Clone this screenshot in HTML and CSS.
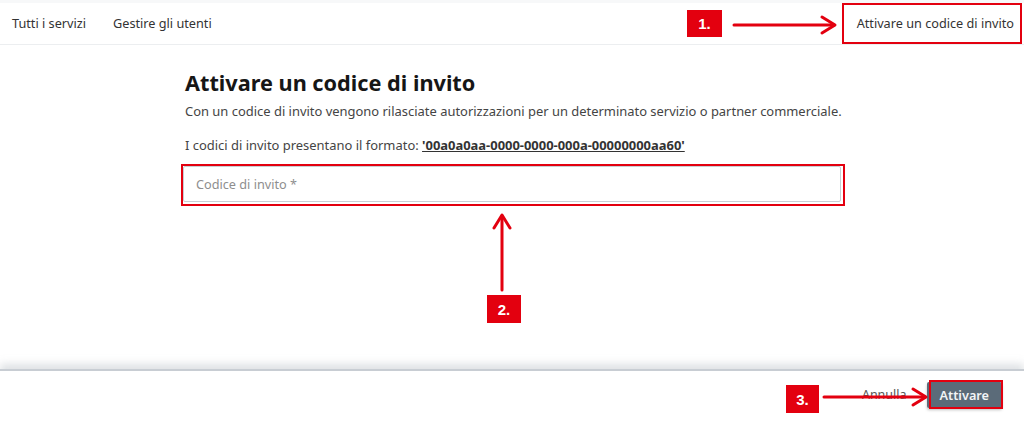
FILE: index.html
```html
<!DOCTYPE html>
<html lang="it">
<head>
<meta charset="utf-8">
<title>Attivare un codice di invito</title>
<link rel="stylesheet" href="styles.css">
</head>
<body>
<div class="page">
  <header class="nav">
    <div class="nav-left">
      <a class="nav-link">Tutti i servizi</a>
      <a class="nav-link">Gestire gli utenti</a>
    </div>
    <a class="nav-link nav-active">Attivare un codice di invito</a>
  </header>

  <main class="main">
    <div class="content">
      <h1 class="title">Attivare un codice di invito</h1>
      <p class="lead">Con un codice di invito vengono rilasciate autorizzazioni per un determinato servizio o partner commerciale.</p>
      <p class="format">I codici di invito presentano il formato: <strong class="code">'00a0a0aa-0000-0000-000a-00000000aa60'</strong></p>
      <div class="field">
        <input class="input" type="text" placeholder="Codice di invito *">
      </div>
    </div>
  </main>

  <footer class="footer">
    <span class="cancel">Annulla</span>
    <button class="btn">Attivare</button>
  </footer>

  <!-- annotation overlay -->
  <div class="mark mark-nav"></div>
  <div class="mark mark-input"></div>
  <div class="mark mark-btn"></div>
  <div class="tag tag-1">1.</div>
  <div class="tag tag-2">2.</div>
  <div class="tag tag-3">3.</div>
  <svg class="arrows" width="1024" height="422" viewBox="0 0 1024 422">
    <g fill="none" stroke="#e3000f" stroke-width="3" stroke-linecap="round" stroke-linejoin="round">
      <line x1="734" y1="25" x2="834" y2="25"/>
      <polyline points="822,17 835,25 822,33"/>
      <line x1="502" y1="290" x2="502" y2="216"/>
      <polyline points="494,228 502,215 510,228"/>
      <line x1="824" y1="397" x2="925" y2="397"/>
      <polyline points="913,389 926,397 913,405"/>
    </g>
  </svg>
</div>
</body>
</html>
```

FILE: styles.css
```css
* { box-sizing: border-box; }
html, body { margin: 0; padding: 0; }
body {
  font-family: "Noto Sans", "Open Sans", sans-serif;
  background: #ffffff;
  color: #333;
}
.page {
  position: relative;
  width: 1024px;
  height: 422px;
  display: flex;
  flex-direction: column;
  overflow: hidden;
}
.nav {
  height: 45px;
  border-top: 3px solid #f7f8f9;
  border-bottom: 1px solid #eceef0;
  display: flex;
  align-items: center;
  justify-content: space-between;
  padding: 0 10px 2px 12px;
}
.nav-left { display: flex; gap: 27px; }
.nav-link {
  font-size: 12.7px;
  color: #333;
}
.main {
  flex: 1;
  display: flex;
  justify-content: center;
}
.content {
  width: 662px;
  padding-top: 24px;
}
.title {
  margin: 0 0 0 4px;
  font-size: 21.7px;
  font-weight: 700;
  color: #161616;
  line-height: 28px;
}
.lead {
  margin: 5px 0 0 4px;
  font-size: 12.95px;
  color: #444;
  line-height: 19px;
}
.format {
  margin: 15px 0 0 4px;
  font-size: 12.95px;
  color: #444;
  line-height: 19px;
}
.code {
  color: #333;
  text-decoration: underline;
}
.field {
  margin-top: 11px;
  padding: 0 2px;
}
.input {
  display: block;
  width: 100%;
  height: 36px;
  border: 1px solid #c9cfd4;
  border-radius: 2px;
  padding: 0 12px;
  font-family: inherit;
  font-size: 12.7px;
  color: #333;
  background: #fff;
  outline: none;
}
.input::placeholder { color: #8e8e8e; }
.footer {
  height: 53px;
  border-top: 2px solid #c8cdd3;
  box-shadow: 0 -5px 8px rgba(160, 168, 178, 0.35);
  display: flex;
  align-items: center;
  justify-content: flex-end;
  gap: 20px;
  padding: 0 22px 4px 0;
}
.cancel {
  font-size: 12.5px;
  color: #555;
}
.btn {
  height: 26px;
  padding: 0 13px;
  border: none;
  border-radius: 2px;
  background: #5b6b79;
  color: #f2f4f6;
  font-family: inherit;
  font-size: 12.7px;
  font-weight: 600;
  box-shadow: 0 2px 3px rgba(0, 0, 0, 0.25);
}

/* annotations */
.mark {
  position: absolute;
  border: 2px solid #e3000f;
}
.mark-nav { left: 842px; top: 3px; width: 180px; height: 41px; }
.mark-input { left: 181px; top: 164px; width: 664px; height: 42px; }
.mark-btn { left: 929px; top: 380px; width: 74px; height: 29px; }
.tag {
  position: absolute;
  background: #e3000f;
  color: #fff;
  font-family: "Liberation Sans", Arial, sans-serif;
  font-weight: 700;
  font-size: 15px;
  display: flex;
  align-items: center;
  justify-content: center;
}
.tag-1 { left: 687px; top: 10px; width: 35px; height: 27px; }
.tag-2 { left: 487px; top: 295px; width: 34px; height: 28px; }
.tag-3 { left: 786px; top: 385px; width: 33px; height: 28px; }
.arrows { position: absolute; left: 0; top: 0; pointer-events: none; }
```
